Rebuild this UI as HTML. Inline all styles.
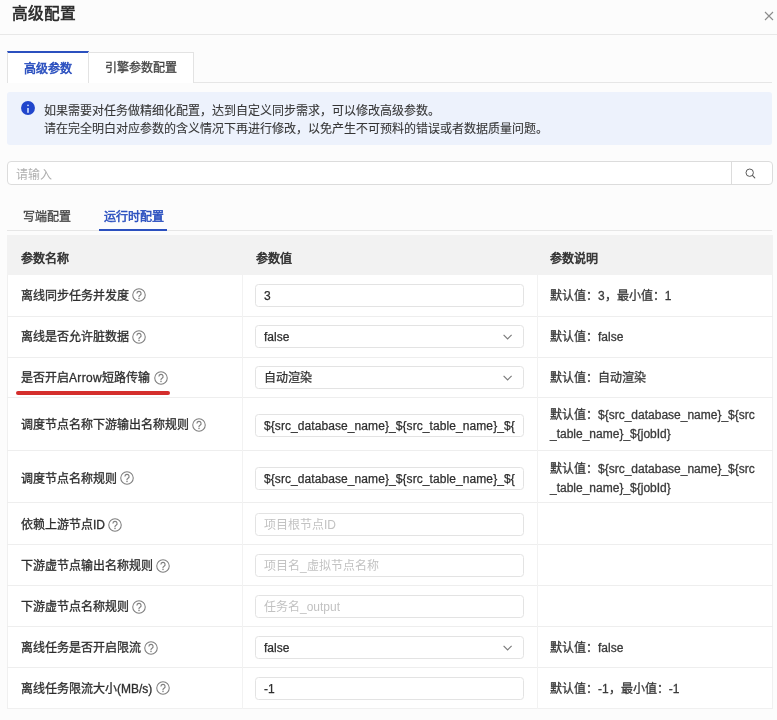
<!DOCTYPE html>
<html lang="zh-CN"><head><meta charset="utf-8">
<style>
*{box-sizing:border-box;margin:0;padding:0}
html,body{width:777px;height:720px;overflow:hidden}
body{will-change:transform;background:#fcfcfc;font-family:"Liberation Sans",sans-serif;font-size:12px;color:#2e2e2e;position:relative}
div,svg{position:absolute}
.t{line-height:20px;white-space:nowrap;-webkit-text-stroke:0.3px currentColor}
.inp span{-webkit-text-stroke:0.25px currentColor}
.hdr{left:0;top:0;width:777px;height:35px;border-bottom:1px solid #e8e8e8;background:#fcfcfc}
.title{left:12px;top:4px;font-size:15.7px;color:#2a2a2a;-webkit-text-stroke:0.55px #2a2a2a !important}
.tabline{left:7px;top:82px;width:765px;height:1px;background:#e6e6e6}
.tab{top:51px;height:32px;border:1px solid #e3e3e3;border-bottom:none;background:#fff}
.tab1{left:7px;width:82px;border-top:2px solid #2b50bf}
.tab2{left:88px;width:106px;top:52px;height:31px}
.info{left:7px;top:92px;width:765px;height:53px;background:#edf2fc;border-radius:3px}
.search{left:7px;top:161px;width:766px;height:24px;border:1px solid #dcdcdc;border-radius:4px;background:#fff}
.sbtn{left:731px;top:161px;width:1px;height:24px;background:#dcdcdc}
.subline{left:7px;top:230px;width:765px;height:1px;background:#e6e6e6}
.subul{left:99px;top:229px;width:68px;height:2px;background:#2b50bf}
.tbl{left:7px;top:235px;width:766px;height:474px;background:#fff;border:1px solid #f0f0f0}
.th{left:7px;top:235px;width:766px;height:39.5px;background:#f2f2f2}
.hl{left:7px;width:766px;height:1px;background:#eeeeee}
.vl{top:275px;width:1px;height:434px;background:#f2f2f2}
.inp{left:255px;width:269px;height:23px;border:1px solid #e3e3e3;border-radius:3.5px;background:#fff;overflow:hidden;white-space:nowrap}
.inp span{position:absolute;left:8px;top:1px;line-height:20px}
.ls{letter-spacing:0.08px}
.inp span.ph{color:#c2c2c2;-webkit-text-stroke:0}
.red{left:15.5px;top:391.2px;width:154px;height:3.6px;background:#d42e2c;border-radius:2px}
</style></head><body><div id="w" style="left:0;top:0;width:777px;height:720px;filter:blur(0.35px)">

<div class="hdr"></div>
<div class="t title">高级配置</div>
<svg style="left:764px;top:11px" width="10" height="10" viewBox="0 0 10 10"><path d="M1 1L9 9M9 1L1 9" stroke="#8c8c8c" stroke-width="1.1"/></svg>
<div class="tabline"></div>
<div class="tab tab1"></div><div class="tab tab2"></div>
<div class="t" style="left:24px;top:58.5px;color:#2b50bf;-webkit-text-stroke:0.6px #2b50bf">高级参数</div>
<div class="t" style="left:105px;top:58px;color:#444">引擎参数配置</div>
<div class="info"></div>
<svg style="left:21px;top:101.4px" width="14" height="14" viewBox="0 0 14 14"><circle cx="7" cy="7" r="6.95" fill="#2146cc"/><rect x="6.15" y="7" width="1.7" height="4.8" fill="#c9d8fb"/><rect x="6.15" y="3.7" width="1.7" height="1.4" fill="#c9d8fb"/></svg>
<div class="t" style="left:44px;top:102px;line-height:18px;color:#363636;-webkit-text-stroke:0.1px #363636">如果需要对任务做精细化配置，达到自定义同步需求，可以修改高级参数。<br>请在完全明白对应参数的含义情况下再进行修改，以免产生不可预料的错误或者数据质量问题。</div>
<div class="search"></div><div class="sbtn"></div>
<div class="t" style="left:16px;top:165px;color:#b0b0b0;-webkit-text-stroke:0">请输入</div>
<svg style="left:745px;top:168px" width="11" height="11" viewBox="0 0 11 11"><circle cx="4.7" cy="4.7" r="3.7" fill="none" stroke="#5a5a5a" stroke-width="1"/><path d="M7.4 7.4L9.8 9.8" stroke="#5a5a5a" stroke-width="1.1" stroke-linecap="round"/></svg>
<div class="t" style="left:23px;top:207px;color:#444">写端配置</div>
<div class="t" style="left:103.5px;top:207px;color:#2b50bf;-webkit-text-stroke:0.5px #2b50bf">运行时配置</div>
<div class="subline"></div><div class="subul"></div>
<div class="tbl"></div><div class="th"></div>
<div class="hl" style="top:316px"></div>
<div class="hl" style="top:357px"></div>
<div class="hl" style="top:397px"></div>
<div class="hl" style="top:450px"></div>
<div class="hl" style="top:502px"></div>
<div class="hl" style="top:544px"></div>
<div class="hl" style="top:585px"></div>
<div class="hl" style="top:626px"></div>
<div class="hl" style="top:667px"></div>
<div class="vl" style="left:242px"></div><div class="vl" style="left:537px"></div>
<div class="t" style="left:20.5px;top:249px;-webkit-text-stroke:0.6px #333">参数名称</div>
<div class="t" style="left:256px;top:249px;-webkit-text-stroke:0.6px #333">参数值</div>
<div class="t" style="left:550px;top:249px;-webkit-text-stroke:0.6px #333">参数说明</div>
<div class="t" style="left:21px;top:286px"><span class="nm">离线同步任务并发度</span></div>
<svg class="q" style="left:132.10px;top:288.40px" width="14" height="14" viewBox="0 0 14 14"><circle cx="7" cy="7" r="6.25" fill="none" stroke="#7e7e7e" stroke-width="1.05"/><path d="M4.9 5.5a2.1 2.1 0 1 1 2.9 1.95c-.55.25-.8.6-.8 1.15v.55" fill="none" stroke="#7e7e7e" stroke-width="1.15"/><circle cx="7" cy="10.55" r="0.75" fill="#7e7e7e"/></svg>
<div class="inp" style="top:284px"><span class="">3</span></div>
<div class="t" style="left:550px;top:286px;color:#3a3a3a">默认值：3，最小值：1</div>
<div class="t" style="left:21px;top:327px"><span class="nm">离线是否允许脏数据</span></div>
<svg class="q" style="left:132.10px;top:329.50px" width="14" height="14" viewBox="0 0 14 14"><circle cx="7" cy="7" r="6.25" fill="none" stroke="#7e7e7e" stroke-width="1.05"/><path d="M4.9 5.5a2.1 2.1 0 1 1 2.9 1.95c-.55.25-.8.6-.8 1.15v.55" fill="none" stroke="#7e7e7e" stroke-width="1.15"/><circle cx="7" cy="10.55" r="0.75" fill="#7e7e7e"/></svg>
<div class="inp" style="top:325px"><span class="">false</span></div>
<svg class="chev" style="left:503px;top:334px" width="10" height="6" viewBox="0 0 10 6"><path d="M0.6 0.9L4.6 4.9L8.6 0.9" fill="none" stroke="#7a7a7a" stroke-width="1.15"/></svg>
<div class="t" style="left:550px;top:327px;color:#3a3a3a">默认值：false</div>
<div class="t" style="left:21px;top:368px"><span class="nm">是否开启<span style="letter-spacing:0.35px">Arrow</span>短路传输</span></div>
<svg class="q" style="left:153.90px;top:370.60px" width="14" height="14" viewBox="0 0 14 14"><circle cx="7" cy="7" r="6.25" fill="none" stroke="#7e7e7e" stroke-width="1.05"/><path d="M4.9 5.5a2.1 2.1 0 1 1 2.9 1.95c-.55.25-.8.6-.8 1.15v.55" fill="none" stroke="#7e7e7e" stroke-width="1.15"/><circle cx="7" cy="10.55" r="0.75" fill="#7e7e7e"/></svg>
<div class="inp" style="top:366px"><span class="">自动渲染</span></div>
<svg class="chev" style="left:503px;top:375px" width="10" height="6" viewBox="0 0 10 6"><path d="M0.6 0.9L4.6 4.9L8.6 0.9" fill="none" stroke="#7a7a7a" stroke-width="1.15"/></svg>
<div class="t" style="left:550px;top:368px;color:#3a3a3a">默认值：自动渲染</div>
<div class="t" style="left:21px;top:415px"><span class="nm">调度节点名称下游输出名称规则</span></div>
<svg class="q" style="left:191.80px;top:418.00px" width="14" height="14" viewBox="0 0 14 14"><circle cx="7" cy="7" r="6.25" fill="none" stroke="#7e7e7e" stroke-width="1.05"/><path d="M4.9 5.5a2.1 2.1 0 1 1 2.9 1.95c-.55.25-.8.6-.8 1.15v.55" fill="none" stroke="#7e7e7e" stroke-width="1.15"/><circle cx="7" cy="10.55" r="0.75" fill="#7e7e7e"/></svg>
<div class="inp" style="top:414px"><span class="ls">${src_database_name}_${src_table_name}_${</span></div>
<div class="t" style="left:550px;top:406px;line-height:19px;color:#3a3a3a">默认值：${src_database_name}_${src<br>_table_name}_${jobId}</div>
<div class="t" style="left:21px;top:469px"><span class="nm">调度节点名称规则</span></div>
<svg class="q" style="left:119.80px;top:471.40px" width="14" height="14" viewBox="0 0 14 14"><circle cx="7" cy="7" r="6.25" fill="none" stroke="#7e7e7e" stroke-width="1.05"/><path d="M4.9 5.5a2.1 2.1 0 1 1 2.9 1.95c-.55.25-.8.6-.8 1.15v.55" fill="none" stroke="#7e7e7e" stroke-width="1.15"/><circle cx="7" cy="10.55" r="0.75" fill="#7e7e7e"/></svg>
<div class="inp" style="top:467px"><span class="ls">${src_database_name}_${src_table_name}_${</span></div>
<div class="t" style="left:550px;top:460px;line-height:19px;color:#3a3a3a">默认值：${src_database_name}_${src<br>_table_name}_${jobId}</div>
<div class="t" style="left:21px;top:515px"><span class="nm">依赖上游节点ID</span></div>
<svg class="q" style="left:108.00px;top:517.60px" width="14" height="14" viewBox="0 0 14 14"><circle cx="7" cy="7" r="6.25" fill="none" stroke="#7e7e7e" stroke-width="1.05"/><path d="M4.9 5.5a2.1 2.1 0 1 1 2.9 1.95c-.55.25-.8.6-.8 1.15v.55" fill="none" stroke="#7e7e7e" stroke-width="1.15"/><circle cx="7" cy="10.55" r="0.75" fill="#7e7e7e"/></svg>
<div class="inp" style="top:513px"><span class="ph">项目根节点ID</span></div>
<div class="t" style="left:21px;top:556px"><span class="nm">下游虚节点输出名称规则</span></div>
<svg class="q" style="left:155.90px;top:558.70px" width="14" height="14" viewBox="0 0 14 14"><circle cx="7" cy="7" r="6.25" fill="none" stroke="#7e7e7e" stroke-width="1.05"/><path d="M4.9 5.5a2.1 2.1 0 1 1 2.9 1.95c-.55.25-.8.6-.8 1.15v.55" fill="none" stroke="#7e7e7e" stroke-width="1.15"/><circle cx="7" cy="10.55" r="0.75" fill="#7e7e7e"/></svg>
<div class="inp" style="top:554px"><span class="ph">项目名_虚拟节点名称</span></div>
<div class="t" style="left:21px;top:597px"><span class="nm">下游虚节点名称规则</span></div>
<svg class="q" style="left:131.90px;top:599.50px" width="14" height="14" viewBox="0 0 14 14"><circle cx="7" cy="7" r="6.25" fill="none" stroke="#7e7e7e" stroke-width="1.05"/><path d="M4.9 5.5a2.1 2.1 0 1 1 2.9 1.95c-.55.25-.8.6-.8 1.15v.55" fill="none" stroke="#7e7e7e" stroke-width="1.15"/><circle cx="7" cy="10.55" r="0.75" fill="#7e7e7e"/></svg>
<div class="inp" style="top:595px"><span class="ph">任务名_output</span></div>
<div class="t" style="left:21px;top:638px"><span class="nm">离线任务是否开启限流</span></div>
<svg class="q" style="left:143.70px;top:640.60px" width="14" height="14" viewBox="0 0 14 14"><circle cx="7" cy="7" r="6.25" fill="none" stroke="#7e7e7e" stroke-width="1.05"/><path d="M4.9 5.5a2.1 2.1 0 1 1 2.9 1.95c-.55.25-.8.6-.8 1.15v.55" fill="none" stroke="#7e7e7e" stroke-width="1.15"/><circle cx="7" cy="10.55" r="0.75" fill="#7e7e7e"/></svg>
<div class="inp" style="top:636px"><span class="">false</span></div>
<svg class="chev" style="left:503px;top:645px" width="10" height="6" viewBox="0 0 10 6"><path d="M0.6 0.9L4.6 4.9L8.6 0.9" fill="none" stroke="#7a7a7a" stroke-width="1.15"/></svg>
<div class="t" style="left:550px;top:638px;color:#3a3a3a">默认值：false</div>
<div class="t" style="left:21px;top:679px"><span class="nm">离线任务限流大小(MB/s)</span></div>
<svg class="q" style="left:155.90px;top:681.40px" width="14" height="14" viewBox="0 0 14 14"><circle cx="7" cy="7" r="6.25" fill="none" stroke="#7e7e7e" stroke-width="1.05"/><path d="M4.9 5.5a2.1 2.1 0 1 1 2.9 1.95c-.55.25-.8.6-.8 1.15v.55" fill="none" stroke="#7e7e7e" stroke-width="1.15"/><circle cx="7" cy="10.55" r="0.75" fill="#7e7e7e"/></svg>
<div class="inp" style="top:677px"><span class="">-1</span></div>
<div class="t" style="left:550px;top:679px;color:#3a3a3a">默认值：-1，最小值：-1</div>
<div class="red"></div>
</div></body></html>
